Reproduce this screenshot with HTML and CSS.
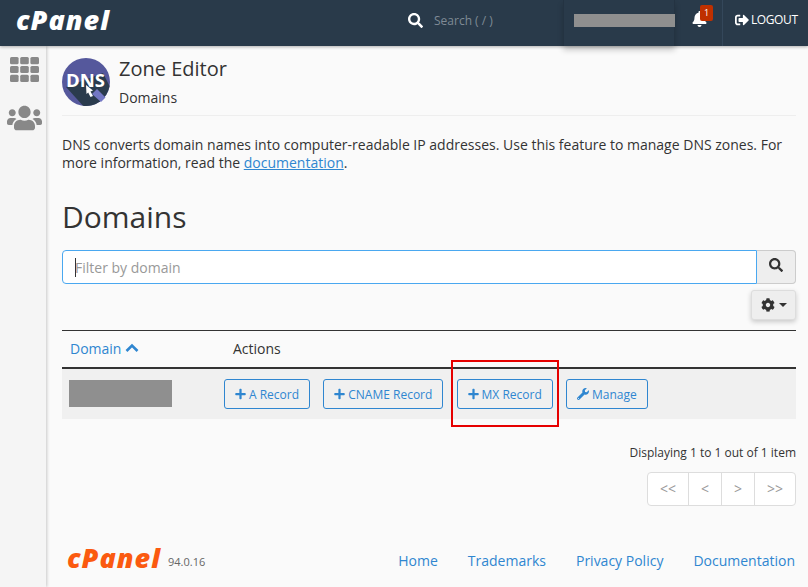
FILE: index.html
```html
<!DOCTYPE html>
<html lang="en">
<head>
  <meta charset="UTF-8">
  <title>Zone Editor - Domains</title>
  <link rel="stylesheet" href="styles.css">
</head>
<body>
  <header class="topbar">
    <span class="brand">cPanel</span>
    <div class="search">
      <svg class="search-icon" viewBox="0 0 512 512"><path d="M505 442.7L405.3 343c-4.5-4.5-10.6-7-17-7H372c27.6-35.3 44-79.7 44-128C416 93.1 322.9 0 208 0S0 93.1 0 208s93.1 208 208 208c48.3 0 92.7-16.4 128-44v16.3c0 6.4 2.5 12.5 7 17l99.7 99.7c9.4 9.4 24.6 9.4 33.9 0l28.3-28.3c9.4-9.4 9.4-24.6.1-34zM208 336c-70.7 0-128-57.2-128-128 0-70.7 57.2-128 128-128 70.7 0 128 57.2 128 128 0 70.7-57.2 128-128 128z"/></svg>
      <span class="search-text">Search ( / )</span>
    </div>
    <div class="user"><span class="user-mask"></span></div>
    <div class="bell">
      <svg class="bell-icon" viewBox="0 0 448 512"><path d="M224 512c35.32 0 63.97-28.65 63.97-64H160.03c0 35.35 28.65 64 63.97 64zm215.39-149.71c-19.32-20.76-55.47-51.99-55.47-154.29 0-77.7-54.48-139.9-127.94-155.16V32c0-17.67-14.32-32-31.98-32s-31.98 14.33-31.98 32v20.84C118.56 68.1 64.08 130.3 64.08 208c0 102.3-36.15 133.53-55.47 154.29-6 6.45-8.66 14.16-8.61 21.71.11 16.4 12.98 32 32.1 32h383.8c19.12 0 32-15.6 32.1-32 .05-7.55-2.61-15.27-8.61-21.71z"/></svg>
      <span class="badge">1</span>
    </div>
    <div class="logout">
      <svg class="logout-icon" viewBox="0 0 512 512"><path d="M497 273L329 441c-15 15-41 4.5-41-17v-96H152c-13.3 0-24-10.7-24-24v-96c0-13.3 10.7-24 24-24h136V88c0-21.4 25.9-32 41-17l168 168c9.3 9.4 9.3 24.6 0 34zM192 436v-40c0-6.6-5.4-12-12-12H96c-17.7 0-32-14.3-32-32V160c0-17.7 14.3-32 32-32h84c6.6 0 12-5.4 12-12V76c0-6.6-5.4-12-12-12H96c-53 0-96 43-96 96v192c0 53 43 96 96 96h84c6.6 0 12-5.4 12-12z"/></svg>
      <span>LOGOUT</span>
    </div>
  </header>

  <div class="layout">
    <aside class="sidebar">
      <svg class="side-grid" viewBox="0 0 29 25">
        <rect x="0" y="0" width="8.6" height="7.2" rx="1.5"/><rect x="10.2" y="0" width="8.6" height="7.2" rx="1.5"/><rect x="20.4" y="0" width="8.6" height="7.2" rx="1.5"/>
        <rect x="0" y="8.9" width="8.6" height="7.2" rx="1.5"/><rect x="10.2" y="8.9" width="8.6" height="7.2" rx="1.5"/><rect x="20.4" y="8.9" width="8.6" height="7.2" rx="1.5"/>
        <rect x="0" y="17.8" width="8.6" height="7.2" rx="1.5"/><rect x="10.2" y="17.8" width="8.6" height="7.2" rx="1.5"/><rect x="20.4" y="17.8" width="8.6" height="7.2" rx="1.5"/>
      </svg>
      <svg class="side-users" viewBox="0 0 640 512"><path d="M96 224c35.3 0 64-28.7 64-64s-28.7-64-64-64-64 28.7-64 64 28.7 64 64 64zm448 0c35.3 0 64-28.7 64-64s-28.7-64-64-64-64 28.7-64 64 28.7 64 64 64zm32 32h-64c-17.6 0-33.5 7.1-45.1 18.6 40.3 22.1 68.9 62 75.1 109.4h66c17.7 0 32-14.3 32-32v-32c0-35.3-28.7-64-64-64zm-256 0c61.9 0 112-50.1 112-112S381.9 32 320 32 208 82.1 208 144s50.1 112 112 112zm76.8 32h-8.3c-20.8 10-43.9 16-68.5 16s-47.6-6-68.5-16h-8.3C179.6 288 128 339.6 128 403.2V432c0 26.5 21.5 48 48 48h288c26.5 0 48-21.5 48-48v-28.8c0-63.6-51.6-115.2-115.2-115.2zm-223.7-13.4C161.5 263.1 145.6 256 128 256H64c-35.3 0-64 28.7-64 64v32c0 17.7 14.3 32 32 32h65.9c6.3-47.4 34.9-87.3 75.2-109.4z"/></svg>
    </aside>

    <main class="content">
      <div class="page-head">
        <svg class="dns-icon" viewBox="0 0 48 48">
          <circle cx="24" cy="24" r="24" fill="#55589c"/>
          <path d="M4 29 L41 15 L47.5 28 A24 24 0 0 1 21 47.8 Z" fill="#2a3b4d"/>
          <text x="4" y="29" class="dns-text">DNS</text>
          <path d="M24 27 L31 32.5 L28.5 33.5 L31 38 L28.5 39 L26.2 34.5 L24.5 36 Z" fill="#fff"/>
          <path d="M30 36 L35 31 L43.5 39.5 L39 44 Z" fill="#7377c4"/>
        </svg>
        <div class="head-text">
          <h1>Zone Editor</h1>
          <div class="crumb">Domains</div>
        </div>
      </div>

      <p class="intro">DNS converts domain names into computer-readable IP addresses. Use this feature to manage DNS zones. For more information, read the <a href="#">documentation</a>.</p>

      <h2>Domains</h2>

      <div class="filter">
        <div class="filter-input"><span class="caret"></span><span>Filter by domain</span></div>
        <button class="filter-btn">
          <svg class="dark-icon" viewBox="0 0 512 512"><path d="M505 442.7L405.3 343c-4.5-4.5-10.6-7-17-7H372c27.6-35.3 44-79.7 44-128C416 93.1 322.9 0 208 0S0 93.1 0 208s93.1 208 208 208c48.3 0 92.7-16.4 128-44v16.3c0 6.4 2.5 12.5 7 17l99.7 99.7c9.4 9.4 24.6 9.4 33.9 0l28.3-28.3c9.4-9.4 9.4-24.6.1-34zM208 336c-70.7 0-128-57.2-128-128 0-70.7 57.2-128 128-128 70.7 0 128 57.2 128 128 0 70.7-57.2 128-128 128z"/></svg>
        </button>
      </div>

      <div class="settings-row">
        <button class="settings-btn">
          <svg class="dark-icon" viewBox="0 0 512 512"><path d="M487.4 315.7l-42.6-24.6c4.3-23.2 4.3-47 0-70.2l42.6-24.6c4.9-2.8 7.1-8.6 5.5-14-11.1-35.6-30-67.8-54.7-94.6-3.8-4.1-10-5.1-14.8-2.3L380.8 110c-17.9-15.4-38.5-27.3-60.8-35.1V25.8c0-5.6-3.9-10.5-9.4-11.7-36.7-8.2-74.3-7.8-109.2 0-5.5 1.2-9.4 6.1-9.4 11.7V75c-22.2 7.9-42.8 19.8-60.8 35.1L88.7 85.5c-4.9-2.8-11-1.9-14.8 2.3-24.7 26.7-43.6 58.9-54.7 94.6-1.7 5.4.6 11.2 5.5 14L67.3 221c-4.3 23.2-4.3 47 0 70.2l-42.6 24.6c-4.9 2.8-7.1 8.6-5.5 14 11.1 35.6 30 67.8 54.7 94.6 3.8 4.1 10 5.1 14.8 2.3l42.6-24.6c17.9 15.4 38.5 27.3 60.8 35.1v49.2c0 5.6 3.9 10.5 9.4 11.7 36.7 8.2 74.3 7.8 109.2 0 5.5-1.2 9.4-6.1 9.4-11.7v-49.2c22.2-7.9 42.8-19.8 60.8-35.1l42.6 24.6c4.9 2.8 11 1.9 14.8-2.3 24.7-26.7 43.6-58.9 54.7-94.6 1.5-5.5-.7-11.3-5.6-14.1zM256 336c-44.1 0-80-35.9-80-80s35.9-80 80-80 80 35.9 80 80-35.9 80-80 80z"/></svg>
          <span class="drop-caret"></span>
        </button>
      </div>

      <div class="table-head">
        <a class="col-domain" href="#">Domain
          <svg class="chevron" viewBox="0 0 14 10"><path d="M1.5 8 L7 2.5 L12.5 8" fill="none" stroke="currentColor" stroke-width="2.6"/></svg>
        </a>
        <span class="col-actions">Actions</span>
      </div>
      <div class="table-row">
        <div class="col-domain"><span class="domain-mask"></span></div>
        <div class="actions">
          <button class="action"><svg class="btn-icon" viewBox="0 0 448 512"><path d="M416 208H272V64c0-17.67-14.33-32-32-32h-32c-17.67 0-32 14.33-32 32v144H32c-17.67 0-32 14.33-32 32v32c0 17.67 14.33 32 32 32h144v144c0 17.67 14.33 32 32 32h32c17.67 0 32-14.33 32-32V304h144c17.67 0 32-14.33 32-32v-32c0-17.67-14.33-32-32-32z"/></svg>A Record</button>
          <button class="action"><svg class="btn-icon" viewBox="0 0 448 512"><path d="M416 208H272V64c0-17.67-14.33-32-32-32h-32c-17.67 0-32 14.33-32 32v144H32c-17.67 0-32 14.33-32 32v32c0 17.67 14.33 32 32 32h144v144c0 17.67 14.33 32 32 32h32c17.67 0 32-14.33 32-32V304h144c17.67 0 32-14.33 32-32v-32c0-17.67-14.33-32-32-32z"/></svg>CNAME Record</button>
          <button class="action"><svg class="btn-icon" viewBox="0 0 448 512"><path d="M416 208H272V64c0-17.67-14.33-32-32-32h-32c-17.67 0-32 14.33-32 32v144H32c-17.67 0-32 14.33-32 32v32c0 17.67 14.33 32 32 32h144v144c0 17.67 14.33 32 32 32h32c17.67 0 32-14.33 32-32V304h144c17.67 0 32-14.33 32-32v-32c0-17.67-14.33-32-32-32z"/></svg>MX Record</button>
          <button class="action"><svg class="btn-icon wrench" viewBox="0 0 512 512"><path d="M507.73 109.1c-2.24-9.03-13.54-12.09-20.12-5.51l-74.36 74.36-67.88-11.31-11.31-67.88 74.36-74.36c6.62-6.62 3.43-17.9-5.66-20.16-47.38-11.74-99.55.91-136.58 37.93-39.64 39.64-50.55 97.1-34.05 147.2L18.74 402.76c-24.99 24.99-24.99 65.51 0 90.5 24.99 24.99 65.51 24.99 90.5 0l213.21-213.21c50.12 16.71 107.47 5.68 147.37-34.22 37.07-37.07 49.7-89.32 37.91-136.73zM64 472c-13.25 0-24-10.75-24-24 0-13.26 10.75-24 24-24s24 10.74 24 24c0 13.25-10.75 24-24 24z"/></svg>Manage</button>
        </div>
      </div>

      <div class="displaying">Displaying 1 to 1 out of 1 item</div>
      <div class="pager-row">
        <div class="pager">
          <span class="page wide">&lt;&lt;</span>
          <span class="page">&lt;</span>
          <span class="page">&gt;</span>
          <span class="page wide">&gt;&gt;</span>
        </div>
      </div>

      <footer class="footer">
        <div class="foot-brand">
          <span class="foot-logo">cPanel</span>
          <span class="version">94.0.16</span>
        </div>
        <nav class="foot-links">
          <a href="#">Home</a>
          <a href="#">Trademarks</a>
          <a href="#">Privacy Policy</a>
          <a href="#">Documentation</a>
        </nav>
      </footer>
    </main>
  </div>

  <div class="highlight"></div>
</body>
</html>
```

FILE: styles.css
```css
* {
  box-sizing: border-box;
}

body {
  margin: 0;
  background-color: #fafafa;
  color: #333;
  font-family: "Open Sans", sans-serif;
  font-size: 14px;
  overflow: hidden;
}

a {
  color: #2f86d0;
}

button {
  font-family: inherit;
}

/* top bar */
.topbar {
  display: flex;
  align-items: stretch;
  height: 46px;
  background-color: #293a4a;
  box-shadow: 0 1px 3px rgba(0, 0, 0, 0.3);
  color: #fff;
  position: relative;
  z-index: 2;
}

.brand {
  width: 391px;
  padding-left: 16px;
  font-style: italic;
  font-weight: 800;
  font-size: 27px;
  line-height: 39px;
  letter-spacing: 1px;
}

.search {
  display: flex;
  align-items: center;
  width: 172px;
  padding: 0 0 6px 17px;
}

.search-icon {
  width: 15px;
  height: 15px;
  fill: #fff;
}

.search-text {
  margin-left: 11px;
  color: #7f8a95;
  font-size: 12px;
}

.user {
  display: flex;
  align-items: center;
  width: 112px;
  padding: 0 0 6px 10px;
  border-left: 1px solid #243342;
  border-right: 1px solid #243342;
  box-shadow: 0 4px 6px rgba(0, 0, 0, 0.2);
}

.user-mask {
  flex: none;
  width: 101px;
  height: 13px;
  background-color: #8f8f8f;
}

.bell {
  width: 48px;
  padding: 11px 0 0 17px;
  border-right: 1px solid #34475a;
  position: relative;
}

.bell-icon {
  display: block;
  width: 15px;
  height: 16px;
  fill: #fff;
}

.badge {
  position: absolute;
  top: 5px;
  left: 25px;
  width: 13px;
  height: 16px;
  border-radius: 2px;
  background-color: #bf3000;
  font-size: 9px;
  line-height: 16px;
  text-align: center;
}

.logout {
  display: flex;
  align-items: center;
  gap: 2px;
  padding: 0 0 7px 12px;
  font-size: 12px;
  letter-spacing: -0.4px;
}

.logout-icon {
  width: 14px;
  height: 14px;
  fill: #fff;
}

/* sidebar */
.layout {
  display: flex;
  height: 541px;
}

.sidebar {
  display: flex;
  flex-direction: column;
  align-items: center;
  width: 46px;
  padding: 11px 0 0 3px;
  background-color: #f5f5f5;
  box-shadow: 1px 0 3px rgba(0, 0, 0, 0.2);
}

.side-grid {
  width: 29px;
  height: 25px;
  fill: #888;
}

.side-users {
  width: 35px;
  height: 28px;
  margin-top: 22px;
  fill: #888;
}

/* main */
.content {
  flex: 1;
  padding: 0 12px 0 16px;
}

.page-head {
  display: flex;
  height: 70px;
  padding-top: 12px;
  border-bottom: 1px solid #eee;
}

.dns-icon {
  width: 48px;
  height: 48px;
}

.dns-text {
  font-family: "Open Sans", sans-serif;
  font-weight: 700;
  font-size: 18.5px;
  fill: #fff;
}

.head-text {
  margin-left: 9px;
}

h1 {
  margin: 0;
  font-size: 20px;
  font-weight: 400;
  line-height: 22px;
}

.crumb {
  margin-top: 9px;
  line-height: 18px;
}

.intro {
  margin: 20px 0 0;
  line-height: 18px;
}

h2 {
  margin: 24px 0 0;
  font-size: 30px;
  font-weight: 400;
  line-height: 41px;
}

.filter {
  display: flex;
  height: 34px;
  margin-top: 13px;
}

.filter-input {
  display: flex;
  align-items: center;
  flex: 1;
  padding-left: 12px;
  border: 1px solid #4aa8f0;
  border-radius: 4px 0 0 4px;
  background-color: #fff;
  color: #999;
}

.caret {
  width: 1px;
  height: 19px;
  margin-right: -1px;
  background-color: #333;
}

.filter-btn {
  width: 39px;
  border: 1px solid #ccc;
  border-left: none;
  border-radius: 0 4px 4px 0;
  background-color: #eee;
}

.dark-icon {
  width: 14px;
  height: 14px;
  fill: #333;
}

.settings-row {
  display: flex;
  justify-content: flex-end;
  margin-top: 6px;
}

.settings-btn {
  display: flex;
  align-items: center;
  justify-content: center;
  gap: 4px;
  width: 45px;
  height: 30px;
  padding: 0;
  border: 1px solid #ddd;
  border-radius: 3px;
  background-color: #eee;
  box-shadow: 0 2px 5px rgba(0, 0, 0, 0.2);
}

.drop-caret {
  border-top: 4px solid #333;
  border-left: 4px solid transparent;
  border-right: 4px solid transparent;
}

.table-head {
  display: flex;
  align-items: center;
  height: 39px;
  margin-top: 10px;
  padding-bottom: 2px;
  border-top: 1px solid #333;
  border-bottom: 2px solid #333;
}

.col-domain {
  display: flex;
  align-items: center;
  gap: 4px;
  width: 162px;
  padding-left: 8px;
  text-decoration: none;
}

.col-actions {
  margin-left: 9px;
}

.chevron {
  width: 14px;
  height: 10px;
}

.table-row {
  display: flex;
  align-items: center;
  height: 50px;
  background-color: #f0f0f0;
}

.table-row .col-domain {
  padding-left: 7px;
}

.domain-mask {
  width: 103px;
  height: 27px;
  margin-bottom: 2px;
  background-color: #8f8f8f;
}

.actions {
  display: flex;
  gap: 13.2px;
}

.action {
  display: flex;
  align-items: center;
  gap: 3px;
  height: 30px;
  padding: 0 10px;
  border: 1px solid #2f86d0;
  border-radius: 3px;
  background-color: transparent;
  color: #2f86d0;
  font-size: 12px;
}

.btn-icon {
  width: 11px;
  height: 12px;
  fill: #2f86d0;
}

.btn-icon.wrench {
  width: 12px;
}

.displaying {
  margin-top: 25px;
  font-size: 12px;
  line-height: 18px;
  text-align: right;
}

.pager-row {
  display: flex;
  justify-content: flex-end;
  margin-top: 10px;
}

.pager {
  display: flex;
  height: 34px;
  border: 1px solid #ddd;
  border-radius: 4px;
  background-color: #fff;
}

.page {
  width: 33px;
  border-right: 1px solid #ddd;
  color: #999;
  line-height: 32px;
  text-align: center;
}

.page.wide {
  width: 41px;
}

.page:last-child {
  width: 40px;
  border-right: none;
}

.footer {
  display: flex;
  justify-content: space-between;
  margin-top: 35px;
}

.foot-brand {
  display: flex;
  align-items: center;
  gap: 7px;
  padding: 3px 0 0 5px;
}

.foot-logo {
  color: #fb5a10;
  font-style: italic;
  font-weight: 800;
  font-size: 27px;
  line-height: 28px;
  letter-spacing: 1px;
}

.version {
  margin-top: 6px;
  color: #666;
  font-size: 11px;
}

.foot-links {
  display: flex;
  gap: 30px;
  padding: 10px 1px 0 0;
}

.foot-links a {
  text-decoration: none;
}

/* red box drawn over the MX button in the screenshot */
.highlight {
  position: absolute;
  top: 360px;
  left: 451px;
  width: 108px;
  height: 67px;
  border: 2px solid #e60000;
}
```
